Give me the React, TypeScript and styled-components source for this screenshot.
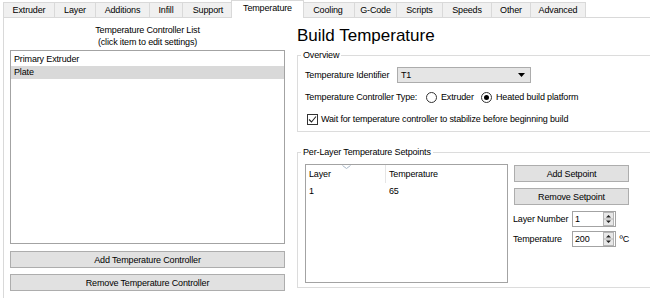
import styled, { createGlobalStyle, css } from 'styled-components'

const GlobalStyle = createGlobalStyle`
  html, body {
    margin: 0;
    padding: 0;
    background: #fff;
  }
  body {
    font-family: "Liberation Sans", Arial, sans-serif;
    font-size: 9px;
    letter-spacing: -0.15px;
    color: #000;
  }
`

const Window = styled.div`
  box-sizing: border-box;
  width: 650px;
  height: 298px;
  overflow: hidden;
  padding-left: 3px;
  background: #fff;
`

const TabBar = styled.div`
  display: flex;
  align-items: flex-end;
  height: 17px;
`

const Tab = styled.div<{ $width: number; $active?: boolean }>`
  box-sizing: border-box;
  display: flex;
  align-items: center;
  justify-content: center;
  width: ${({ $width }) => $width}px;
  height: 15px;
  margin-right: -1px;
  border: 1px solid #d9d9d9;
  border-bottom: none;
  background: #f0f0f0;
  white-space: nowrap;

  ${({ $active, $width }) =>
    $active &&
    css`
      position: relative;
      z-index: 1;
      width: ${$width + 4}px;
      height: 18px;
      margin: 0 -3px -1px -2px;
      padding-bottom: 3px;
      background: #fff;
    `}
`

const Pane = styled.div`
  display: flex;
  height: 281px;
  border-top: 1px solid #d9d9d9;
  border-left: 1px solid #d9d9d9;
`

const LeftPanel = styled.div`
  display: flex;
  flex-direction: column;
  flex: none;
  width: 287px;
  padding: 6px 6px 0;
  box-sizing: border-box;
`

const ListCaption = styled.div`
  line-height: 12px;
  text-align: center;
  margin-bottom: 2px;
`

const ListBox = styled.div`
  box-sizing: border-box;
  height: 194px;
  padding-top: 2px;
  border: 1px solid #a3a3a3;
  background: #fff;
`

const ListItem = styled.div<{ $selected?: boolean }>`
  height: 13px;
  line-height: 13px;
  padding-left: 3px;
  background: ${({ $selected }) => ($selected ? '#d9d9d9' : 'transparent')};
`

const Button = styled.div<{ $gap?: number }>`
  box-sizing: border-box;
  display: flex;
  align-items: center;
  justify-content: center;
  height: 17px;
  margin-top: ${({ $gap = 0 }) => $gap}px;
  border: 1px solid #adadad;
  background: #e1e1e1;
`

const RightPanel = styled.div`
  flex: none;
  width: 370px;
  padding: 8px 0 0 6px;
`

const Title = styled.div`
  font-size: 17px;
  line-height: 20px;
  letter-spacing: normal;
  margin-bottom: 3px;
`

const Group = styled.fieldset<{ $gap?: number }>`
  margin: ${({ $gap = 0 }) => $gap}px 0 0;
  padding: 6px 7px 4px;
  min-width: 0;
  border: 1px solid #dcdcdc;
`

const Legend = styled.legend`
  padding: 0 2px;
  margin-left: -4px;
  line-height: 12px;
`

const Rows = styled.div`
  display: flex;
  flex-direction: column;
  gap: 6px;
`

const Row = styled.div`
  display: flex;
  align-items: center;
  height: 16px;
  white-space: nowrap;
`

const Label = styled.span<{ $w: number }>`
  flex: none;
  width: ${({ $w }) => $w}px;
`

const Combo = styled.div`
  box-sizing: border-box;
  display: flex;
  align-items: center;
  justify-content: space-between;
  width: 134px;
  height: 16px;
  padding: 0 5px 0 3px;
  border: 1px solid #acacac;
  background: #e5e5e5;
`

const RadioOption = styled.span<{ $w?: number }>`
  display: flex;
  align-items: center;
  gap: 4px;
  width: ${({ $w }) => ($w ? `${$w}px` : 'auto')};
`

const RadioCircle = styled.span<{ $checked?: boolean }>`
  box-sizing: border-box;
  display: flex;
  align-items: center;
  justify-content: center;
  width: 11px;
  height: 11px;
  border: 1px solid #333;
  border-radius: 50%;
  background: #fff;

  &::after {
    content: '';
    display: ${({ $checked }) => ($checked ? 'block' : 'none')};
    width: 5px;
    height: 5px;
    border-radius: 50%;
    background: #000;
  }
`

const CheckBox = styled.span`
  box-sizing: border-box;
  display: flex;
  align-items: center;
  justify-content: center;
  width: 11px;
  height: 11px;
  margin: 0 3px 0 2px;
  border: 1px solid #333;
  background: #fff;
`

const SetpointLayout = styled.div`
  display: flex;
  gap: 6px;
`

const Table = styled.div`
  box-sizing: border-box;
  flex: none;
  width: 203px;
  height: 119px;
  border: 1px solid #a3a3a3;
  background: #fff;
`

const TableHeader = styled.div`
  position: relative;
  display: grid;
  grid-template-columns: 80px 1fr;
  height: 18px;
`

const HeaderCell = styled.div<{ $divider?: boolean }>`
  display: flex;
  align-items: center;
  padding-left: 3px;
  border-right: ${({ $divider }) => ($divider ? '1px solid #e5e5e5' : 'none')};
`

const SortMark = styled.svg`
  position: absolute;
  left: 36px;
  top: 0;
`

const TableRow = styled.div`
  display: grid;
  grid-template-columns: 80px 1fr;
  height: 14px;
  line-height: 14px;
  padding-top: 1px;
`

const Cell = styled.div`
  padding-left: 3px;
`

const SideColumn = styled.div`
  display: flex;
  flex-direction: column;
  width: 115px;
  padding-top: 1px;
`

const SpinRow = styled.div<{ $gap: number }>`
  display: flex;
  align-items: center;
  height: 16px;
  margin: ${({ $gap }) => $gap}px 0 0 -1px;
  white-space: nowrap;
`

const SpinBox = styled.div`
  box-sizing: border-box;
  display: flex;
  align-items: center;
  width: 44px;
  height: 16px;
  padding-left: 2px;
  border: 1px solid #a3a3a3;
  background: #fff;
`

const SpinButtons = styled.svg`
  margin-left: auto;
  margin-right: 1px;
`

const Unit = styled.span`
  margin-left: 4px;
`

const tabs = [
  { label: 'Extruder', width: 52 },
  { label: 'Layer', width: 42 },
  { label: 'Additions', width: 55 },
  { label: 'Infill', width: 34 },
  { label: 'Support', width: 52 },
  { label: 'Temperature', width: 69, active: true },
  { label: 'Cooling', width: 54 },
  { label: 'G-Code', width: 43 },
  { label: 'Scripts', width: 47 },
  { label: 'Speeds', width: 50 },
  { label: 'Other', width: 40 },
  { label: 'Advanced', width: 56 },
]

function Spinner({ value }: { value: string }) {
  return (
    <SpinBox>
      {value}
      <SpinButtons width="11" height="14" viewBox="0 0 11 14">
        <rect x="0.5" y="0.5" width="10" height="13" fill="#e8e8e8" stroke="#b5b5b5" />
        <line x1="1" y1="7" x2="10" y2="7" stroke="#b5b5b5" />
        <path d="M3 5.5 L5.5 3 L8 5.5 Z" fill="#222" />
        <path d="M3 8.5 L5.5 11 L8 8.5 Z" fill="#222" />
      </SpinButtons>
    </SpinBox>
  )
}

export default function App() {
  return (
    <Window>
      <GlobalStyle />
      <TabBar>
        {tabs.map((t) => (
          <Tab key={t.label} $width={t.width} $active={t.active}>
            {t.label}
          </Tab>
        ))}
      </TabBar>

      <Pane>
        <LeftPanel>
          <ListCaption>
            Temperature Controller List
            <br />
            (click item to edit settings)
          </ListCaption>
          <ListBox>
            <ListItem>Primary Extruder</ListItem>
            <ListItem $selected>Plate</ListItem>
          </ListBox>
          <Button $gap={7}>Add Temperature Controller</Button>
          <Button $gap={6}>Remove Temperature Controller</Button>
        </LeftPanel>

        <RightPanel>
          <Title>Build Temperature</Title>

          <Group>
            <Legend>Overview</Legend>
            <Rows>
              <Row>
                <Label $w={92}>Temperature Identifier</Label>
                <Combo>
                  T1
                  <svg width="7" height="4" viewBox="0 0 7 4">
                    <path d="M0 0 H7 L3.5 4 Z" fill="#000" />
                  </svg>
                </Combo>
              </Row>
              <Row>
                <Label $w={121}>Temperature Controller Type:</Label>
                <RadioOption $w={55}>
                  <RadioCircle />
                  Extruder
                </RadioOption>
                <RadioOption>
                  <RadioCircle $checked />
                  Heated build platform
                </RadioOption>
              </Row>
              <Row>
                <CheckBox>
                  <svg width="9" height="9" viewBox="0 0 9 9">
                    <path d="M1 4.5 L3.5 7 L8 1.5" fill="none" stroke="#222" strokeWidth="1.1" />
                  </svg>
                </CheckBox>
                Wait for temperature controller to stabilize before beginning build
              </Row>
            </Rows>
          </Group>

          <Group $gap={14}>
            <Legend>Per-Layer Temperature Setpoints</Legend>
            <SetpointLayout>
              <Table>
                <TableHeader>
                  <HeaderCell $divider>Layer</HeaderCell>
                  <HeaderCell>Temperature</HeaderCell>
                  <SortMark width="9" height="4" viewBox="0 0 9 4">
                    <path d="M0.5 0.5 L4.5 3.5 L8.5 0.5" fill="none" stroke="#a9b8c8" />
                  </SortMark>
                </TableHeader>
                <TableRow>
                  <Cell>1</Cell>
                  <Cell>65</Cell>
                </TableRow>
              </Table>

              <SideColumn>
                <Button>Add Setpoint</Button>
                <Button $gap={6}>Remove Setpoint</Button>
                <SpinRow $gap={6}>
                  <Label $w={59}>Layer Number</Label>
                  <Spinner value="1" />
                </SpinRow>
                <SpinRow $gap={4}>
                  <Label $w={59}>Temperature</Label>
                  <Spinner value="200" />
                  <Unit>ºC</Unit>
                </SpinRow>
              </SideColumn>
            </SetpointLayout>
          </Group>
        </RightPanel>
      </Pane>
    </Window>
  )
}
